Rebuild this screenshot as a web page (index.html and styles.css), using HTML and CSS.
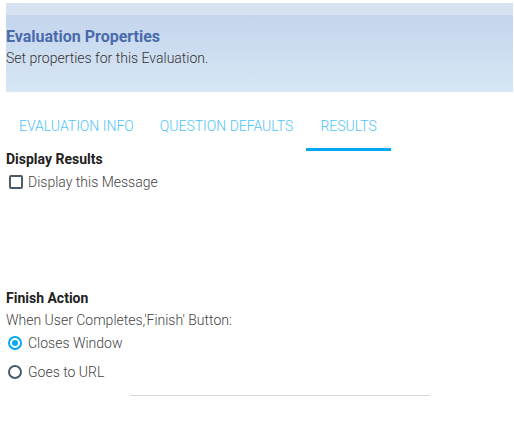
FILE: index.html
```html
<!DOCTYPE html>
<html>
<head>
<meta charset="utf-8">
<link rel="stylesheet" href="styles.css">
</head>
<body>
<div class="page">
  <div class="header">
    <div class="header-strip"></div>
    <div class="header-body">
      <div class="title">Evaluation Properties</div>
      <div class="subtitle">Set properties for this Evaluation.</div>
    </div>
  </div>
  <div class="tabs">
    <div class="tab">EVALUATION INFO</div>
    <div class="tab">QUESTION DEFAULTS</div>
    <div class="tab active">RESULTS</div>
  </div>
  <div class="section">
    <div class="section-title">Display Results</div>
    <label class="option check-row"><span class="checkbox"></span>Display this Message</label>
  </div>
  <div class="section finish">
    <div class="section-title">Finish Action</div>
    <div class="desc">When User Completes,'Finish' Button:</div>
    <label class="option radio-row"><span class="radio checked"></span>Closes Window</label>
    <label class="option radio-row"><span class="radio"></span>Goes to URL</label>
  </div>
  <div class="divider"></div>
</div>
</body>
</html>
```
FILE: styles.css
```css
html, body { margin: 0; padding: 0; background: #fff; }
body { font-family: Roboto, "Noto Sans", sans-serif; }
.page { padding: 3px 1px 0 6px; }
.header { height: 89px; display: flex; flex-direction: column; }
.header-strip { height: 12px; background: #d8e3f2; }
.header-body { flex: 1; background: linear-gradient(#c4d5ed, #d8e7f5); padding-top: 12px; }
.title { font-size: 16px; font-weight: 700; color: #4a6aab; line-height: 20px; }
.subtitle { font-size: 14px; font-weight: 300; color: #333; line-height: 17px; margin-top: 3px; }
.tabs { display: flex; height: 44px; margin-top: 15px; }
.tab { font-size: 14px; font-weight: 300; color: #4fc3f7; padding: 11px 13px 0; line-height: 16px; height: 30px; border-bottom: 3px solid transparent; }
.tab.active { border-bottom-color: #03a9f4; padding: 11px 14px 0; }
.section-title { font-size: 14px; font-weight: 700; color: #222; line-height: 16px; }
.option { display: flex; align-items: center; font-size: 14px; font-weight: 300; color: #444; gap: 6px; padding-left: 2px; }
.check-row { height: 20px; margin-top: 5px; }
.checkbox { width: 10px; height: 10px; border: 2px solid #4a5a6a; border-radius: 2px; margin-left: 1px; margin-right: -1px; }
.finish { margin-top: 98px; }
.desc { font-size: 14px; font-weight: 300; color: #444; line-height: 16px; margin-top: 6px; }
.radio-row { height: 29px; }
.radio { width: 10px; height: 10px; border: 2px solid #4a5a6a; border-radius: 50%; position: relative; }
.radio.checked { border-color: #03a9f4; }
.radio.checked::after { content: ""; position: absolute; left: 2px; top: 2px; width: 6px; height: 6px; border-radius: 50%; background: #03a9f4; }
.divider { width: 300px; height: 1px; background: #d0d8da; margin: 9px 0 0 124px; }
```
